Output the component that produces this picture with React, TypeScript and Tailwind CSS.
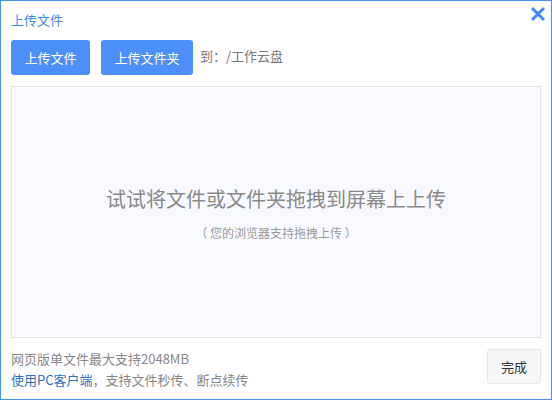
const font = { fontFamily: '"Microsoft YaHei", "Noto Sans CJK SC", "Liberation Sans", sans-serif' };

export default function App() {
  return (
    <div
      className="flex h-[400px] w-[552px] flex-col border border-[#4a8ef2] bg-white px-[10px]"
      style={font}
    >
      <div className="flex h-[39px] items-start justify-between">
        <h1 className="mt-[10px] text-[13px] leading-[18px] text-[#3f8cf0]">上传文件</h1>
        <button className="mr-[-5px] mt-[5px] text-[#3f87f5]">
          <svg width="16" height="16" viewBox="0 0 16 16">
            <path d="M2 2L14 14M14 2L2 14" stroke="currentColor" strokeWidth="3" />
          </svg>
        </button>
      </div>
      <div className="flex items-center">
        <button className="h-[35px] w-[79px] rounded-[3px] bg-[#4d8ff8] text-[13px] text-white">
          上传文件
        </button>
        <button className="ml-[11px] h-[35px] w-[92px] rounded-[3px] bg-[#4d8ff8] text-[13px] text-white">
          上传文件夹
        </button>
        <span className="ml-[7px] mt-[-3px] text-[13px] text-[#777]">到：/工作云盘</span>
      </div>
      <div className="mt-[11px] flex h-[252px] flex-col items-center justify-center border border-[#e3e5ea] bg-[#f8f9fe]">
        <p className="mt-[2px] text-[20px] leading-[26px] text-[#8a8a8a]">试试将文件或文件夹拖拽到屏幕上上传</p>
        <p className="mt-[13px] text-[12px] leading-[16px] text-[#999]">（ 您的浏览器支持拖拽上传 ）</p>
      </div>
      <div className="mt-[10px] flex items-start justify-between">
        <div className="text-[13px] leading-[21px] text-[#888]">
          <p>网页版单文件最大支持2048MB</p>
          <p>
            <span className="text-[#2e72bd]">使用PC客户端</span>，支持文件秒传、断点续传
          </p>
        </div>
        <button className="mt-[1px] h-[35px] w-[54px] rounded-[3px] border border-[#e6e6e6] bg-[#f6f7f7] text-[13px] text-[#333]">
          完成
        </button>
      </div>
    </div>
  );
}
